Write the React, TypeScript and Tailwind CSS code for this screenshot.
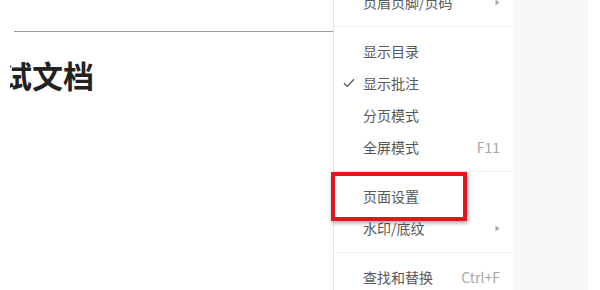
import React from "react";

const font = { fontFamily: '"Noto Sans CJK SC", "Noto Sans", sans-serif' };

function Arrow() {
  return (
    <svg width="5" height="7" viewBox="0 0 5 7" className="flex-none">
      <path d="M0.5 0.5 L4.5 3.5 L0.5 6.5 Z" fill="#a8a8a8" />
    </svg>
  );
}

function Check() {
  return (
    <svg width="12" height="10" viewBox="0 0 12 10" className="flex-none">
      <path d="M1 5.2 L4.2 8.4 L11 1.2" fill="none" stroke="#555" strokeWidth="1.3" />
    </svg>
  );
}

type Item = { label: string; right?: string; arrow?: boolean; checked?: boolean };

function MenuItem({ item }: { item: Item }) {
  return (
    <div className="relative flex h-[32px] items-center pl-[29px] pr-[13px]">
      {item.checked && (
        <div className="absolute left-[9px] top-[11px]">
          <Check />
        </div>
      )}
      <span className="flex-1 text-[14px] leading-none text-[#585858]">{item.label}</span>
      {item.right && <span className="text-[14px] leading-none text-[#a6a6a6]">{item.right}</span>}
      {item.arrow && <Arrow />}
    </div>
  );
}

function Section({ items, first }: { items: Item[]; first?: boolean }) {
  return (
    <div className={first ? "pb-[8px]" : "border-t border-[#efefef] py-[8px]"}>
      {items.map((it) => (
        <MenuItem key={it.label} item={it} />
      ))}
    </div>
  );
}

export default function App() {
  return (
    <div className="relative flex h-[290px] w-[600px] overflow-hidden bg-white" style={font}>
      <div className="flex w-[333px] flex-none flex-col">
        <div className="ml-[14px] mt-[31px] h-px bg-[#9c9c9c]" />
        <div className="ml-[10px] mt-[26px] overflow-hidden">
          <div className="ml-[-40px] whitespace-nowrap text-[31px] font-bold leading-[34px] text-[#222]">
            测试文档
          </div>
        </div>
      </div>
      <div className="mt-[-14px] flex w-[180px] flex-none flex-col border-l border-[#e2e2e2] bg-white shadow-[2px_0_4px_rgba(0,0,0,0.08)]">
        <Section first items={[{ label: "页眉页脚/页码", arrow: true }]} />
        <Section
          items={[
            { label: "显示目录" },
            { label: "显示批注", checked: true },
            { label: "分页模式" },
            { label: "全屏模式", right: "F11" },
          ]}
        />
        <Section items={[{ label: "页面设置" }, { label: "水印/底纹", arrow: true }]} />
        <Section items={[{ label: "查找和替换", right: "Ctrl+F" }]} />
      </div>
      <div className="w-[75px] flex-none bg-[#f7f8fa]" />
      <div className="flex-1 bg-white" />
      <div className="absolute left-[331px] top-[172px] h-[49px] w-[136px] border-[4px] border-[#e5131b] shadow-[1px_2px_4px_rgba(0,0,0,0.35)]" />
    </div>
  );
}
